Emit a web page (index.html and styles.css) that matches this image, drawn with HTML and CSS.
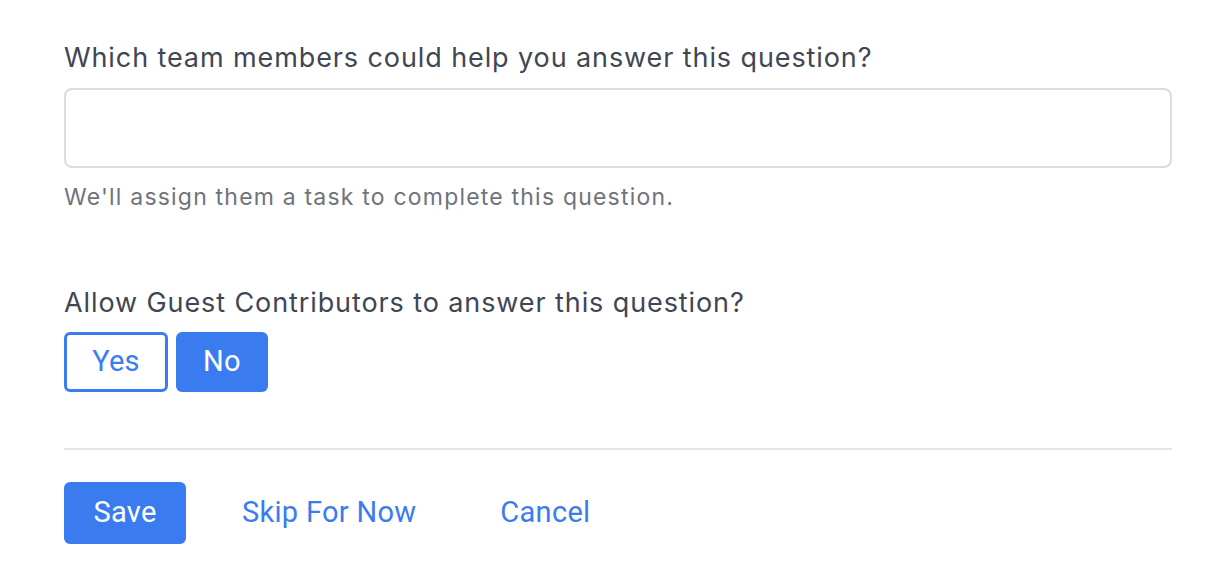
FILE: index.html
```html
<!DOCTYPE html>
<html>
<head>
<meta charset="utf-8">
<link rel="stylesheet" href="styles.css">
</head>
<body>
<div class="form">
  <div class="field">
    <label class="label">Which team members could help you answer this question?</label>
    <div class="input"></div>
    <p class="help">We'll assign them a task to complete this question.</p>
  </div>
  <div class="field guest">
    <label class="label">Allow Guest Contributors to answer this question?</label>
    <div class="toggle">
      <button class="btn btn-outline">Yes</button>
      <button class="btn btn-solid">No</button>
    </div>
  </div>
  <hr class="divider">
  <div class="actions">
    <button class="btn btn-solid save">Save</button>
    <button class="link">Skip For Now</button>
    <button class="link">Cancel</button>
  </div>
</div>
</body>
</html>
```

FILE: styles.css
```css
html, body {
  margin: 0;
  padding: 0;
  background: #ffffff;
}
body {
  font-family: Inter, "Noto Sans", sans-serif;
}
.form {
  padding: 40px 48px 0 64px;
  width: 1108px;
}
.field {
  display: flex;
  flex-direction: column;
}
.label {
  font-size: 27px;
  letter-spacing: 0.9px;
  line-height: 36px;
  color: #3f4654;
  margin-bottom: 12px;
}
.input {
  box-sizing: border-box;
  height: 80px;
  border: 2px solid #d8dce6;
  border-radius: 8px;
  background: #fff;
}
.help {
  margin: 14px 0 0;
  font-size: 23px;
  letter-spacing: 1.2px;
  line-height: 30px;
  color: #6f737b;
}
.guest {
  margin-top: 73px;
}
.guest .label {
  margin-bottom: 11px;
}
.toggle {
  display: flex;
  gap: 8px;
}
.btn {
  font-family: Roboto, "Liberation Sans", sans-serif;
  font-size: 29px;
  letter-spacing: 0.3px;
  height: 60px;
  border-radius: 6px;
  cursor: pointer;
  padding: 0 0 3px;
}
.btn-outline {
  width: 104px;
  background: #fff;
  border: 3px solid #3b7cf0;
  color: #3b7cf0;
}
.btn-solid {
  width: 92px;
  background: #3a7cf0;
  border: none;
  color: #fff;
}
.divider {
  border: none;
  height: 2px;
  background: #e6e6e6;
  margin: 56px 0 32px;
}
.actions {
  display: flex;
  align-items: center;
}
.save {
  width: 122px;
  height: 62px;
}
.link {
  font-family: Roboto, "Liberation Sans", sans-serif;
  font-size: 29px;
  letter-spacing: 0.3px;
  background: none;
  border: none;
  color: #3a7cf0;
  padding: 0 0 3px;
  cursor: pointer;
}
.save + .link {
  margin-left: 56px;
}
.link + .link {
  margin-left: 84px;
}
```
